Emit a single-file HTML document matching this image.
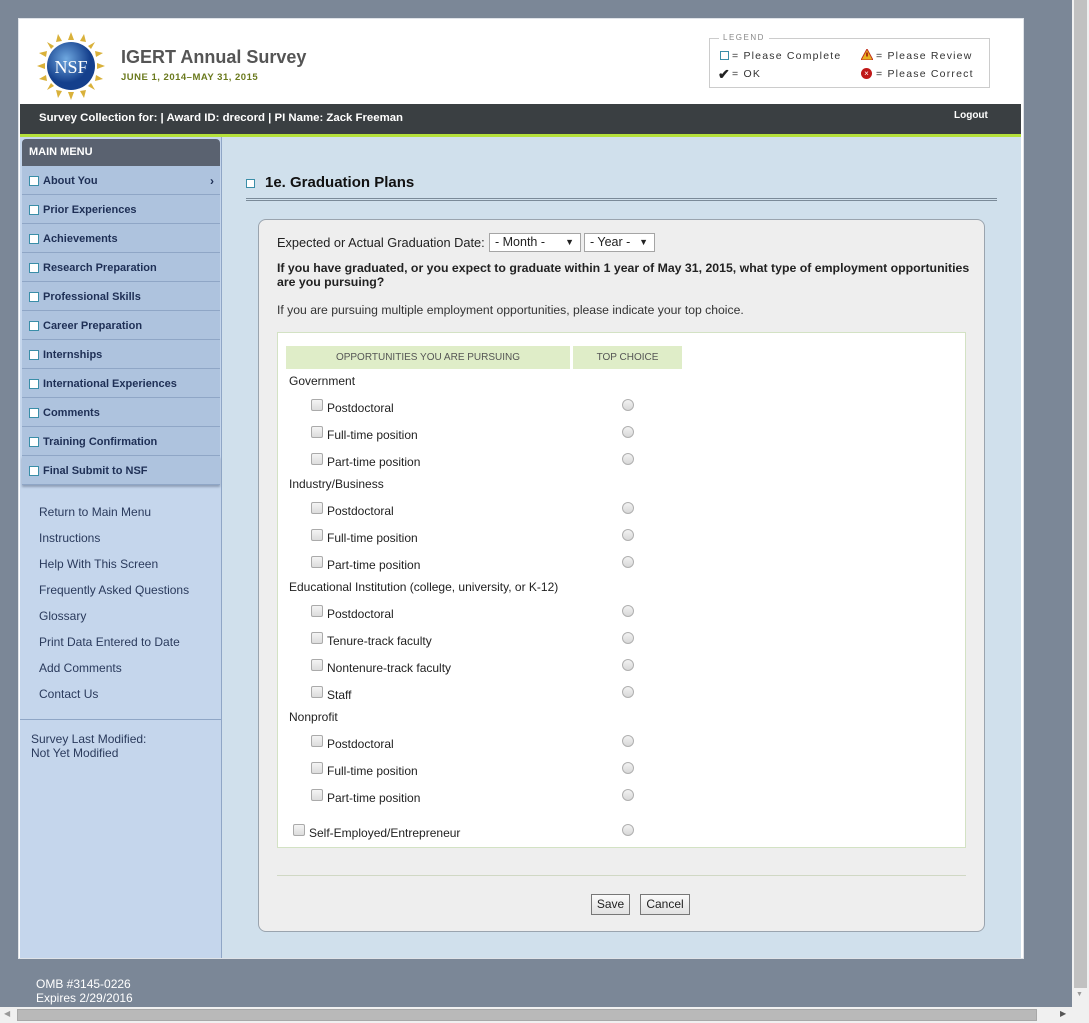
<!DOCTYPE html>
<html><head><meta charset="utf-8"><style>
*{box-sizing:border-box;margin:0;padding:0}
body{width:1089px;height:1023px;background:#7b8797;font-family:"Liberation Sans",Arial,sans-serif;position:relative;overflow:hidden;color:#222}
.a{position:absolute}
.wrap{left:18px;top:18px;width:1006px;height:941px;background:#fff;border:1px solid #dfe3e8}
.mi{position:absolute;left:22px;width:198px;height:29px;background:#aec3de;border-bottom:1px solid #8fa6c6;font-size:11px;font-weight:bold;color:#1e2f55;line-height:30px;padding-left:21px}
.mi:before{content:"";position:absolute;left:7px;top:10px;width:8px;height:8px;border:1px solid #3a8ea8;background:#fff}
.lk{position:absolute;left:39px;font-size:12px;color:#2a3a5c}
.row{position:absolute;height:16px;line-height:16px;font-size:12px;color:#222}
.cb{position:absolute;width:12px;height:12px;border:1px solid #aaa;border-radius:2px;background:linear-gradient(#f4f4f4,#dcdcdc)}
.rd{position:absolute;left:622px;width:12px;height:12px;border:1px solid #b0b0b0;border-radius:50%;background:linear-gradient(#f2f2f2,#d8d8d8)}
.sel{position:absolute;top:233px;height:19px;border:1px solid #a5a5a5;background:#fff;font-size:12.5px;line-height:17px;padding-left:5px}
.sel span{position:absolute;right:6px;top:0;font-size:9px}
.btn{position:absolute;top:894px;height:21px;border:1px solid #777;background:linear-gradient(#fafafa,#e2e2e2);font-size:12px;line-height:19px;text-align:center}
.lg{position:absolute;font-size:10.5px;letter-spacing:1.2px;color:#333}
</style></head><body>
<div class="a wrap"></div>
<svg class="a" style="left:36px;top:31px" width="70" height="70" viewBox="0 0 70 70">
<g fill="#d9b13a">
<polygon points="35,1 38,9 32,9"/><polygon points="35,69 38,61 32,61"/><polygon points="1,35 9,32 9,38"/><polygon points="69,35 61,32 61,38"/>
<polygon points="11,11 18,15 15,18"/><polygon points="59,59 52,55 55,52"/><polygon points="59,11 55,18 52,15"/><polygon points="11,59 15,52 18,55"/>
<polygon points="22,3 26,10 20,11"/><polygon points="48,3 50,11 44,10"/><polygon points="22,67 20,59 26,60"/><polygon points="48,67 44,60 50,59"/>
<polygon points="3,22 11,20 10,26"/><polygon points="3,48 10,44 11,50"/><polygon points="67,22 60,26 59,20"/><polygon points="67,48 59,50 60,44"/>
</g>
<defs><radialGradient id="g" cx="40%" cy="35%"><stop offset="0" stop-color="#6fa8e0"/><stop offset="1" stop-color="#143f8c"/></radialGradient></defs>
<circle cx="35" cy="35" r="24" fill="url(#g)"/>
<text x="35" y="42" font-family="Liberation Serif,serif" font-size="18" fill="#fff" text-anchor="middle">NSF</text>
</svg>
<div class="a" style="left:121px;top:47px;font-size:18px;font-weight:bold;color:#555">IGERT Annual Survey</div>
<div class="a" style="left:121px;top:72px;font-size:9.5px;font-weight:bold;color:#6b7a1e;letter-spacing:.5px">JUNE 1, 2014–MAY 31, 2015</div>
<div class="a" style="left:709px;top:38px;width:281px;height:50px;border:1px solid #ccc"></div>
<div class="a" style="left:719px;top:33px;background:#fff;padding:0 4px;font-size:8px;color:#888;letter-spacing:1.5px">LEGEND</div>
<div class="a" style="left:720px;top:51px;width:9px;height:9px;border:1px solid #3a8ea8"></div>
<div class="lg" style="left:732px;top:50px">= Please Complete</div>
<div class="a" style="left:718px;top:66px;font-size:14px;font-weight:bold">✔</div>
<div class="lg" style="left:732px;top:68px">= OK</div>
<svg class="a" style="left:861px;top:49px" width="12" height="11"><polygon points="6,0 12,11 0,11" fill="#e8b020" stroke="#c03020"/><rect x="5.3" y="3.5" width="1.4" height="4" fill="#900"/></svg>
<div class="lg" style="left:876px;top:50px">= Please Review</div>
<div class="a" style="left:861px;top:68px;width:11px;height:11px;border-radius:50%;background:#c01818;color:#fff;font-size:8px;line-height:11px;text-align:center">×</div>
<div class="lg" style="left:876px;top:68px">= Please Correct</div>
<div class="a" style="left:20px;top:104px;width:1001px;height:30px;background:#3a3f42"></div>
<div class="a" style="left:20px;top:134px;width:1001px;height:3px;background:#b5e13b"></div>
<div class="a" style="left:39px;top:112px;font-size:11.4px;font-weight:bold;color:#fff">Survey Collection for: | Award ID: drecord | PI Name: Zack Freeman</div>
<div class="a" style="left:954px;top:110px;font-size:10px;font-weight:bold;color:#fff">Logout</div>
<div class="a" style="left:20px;top:137px;width:202px;height:821px;background:#c5d6ec;border-right:1px solid #8fa6c6"></div>
<div class="a" style="left:222px;top:137px;width:799px;height:821px;background:#d0e0ec"></div>
<div class="a" style="left:22px;top:139px;width:198px;height:27px;background:#5a6270;border-radius:4px 4px 0 0;color:#fff;font-size:11px;font-weight:bold;line-height:26px;padding-left:7px">MAIN MENU</div>
<div class="mi" style="top:166px">About You<span style="position:absolute;right:6px;font-size:12px">›</span></div>
<div class="mi" style="top:195px">Prior Experiences</div>
<div class="mi" style="top:224px">Achievements</div>
<div class="mi" style="top:253px">Research Preparation</div>
<div class="mi" style="top:282px">Professional Skills</div>
<div class="mi" style="top:311px">Career Preparation</div>
<div class="mi" style="top:340px">Internships</div>
<div class="mi" style="top:369px">International Experiences</div>
<div class="mi" style="top:398px">Comments</div>
<div class="mi" style="top:427px">Training Confirmation</div>
<div class="mi" style="top:456px;box-shadow:0 2px 2px #8fa0b8">Final Submit to NSF</div>
<div class="lk" style="top:505px">Return to Main Menu</div>
<div class="lk" style="top:531px">Instructions</div>
<div class="lk" style="top:557px">Help With This Screen</div>
<div class="lk" style="top:583px">Frequently Asked Questions</div>
<div class="lk" style="top:609px">Glossary</div>
<div class="lk" style="top:635px">Print Data Entered to Date</div>
<div class="lk" style="top:661px">Add Comments</div>
<div class="lk" style="top:687px">Contact Us</div>
<div class="a" style="left:20px;top:719px;width:202px;height:1px;background:#8fa6c6"></div>
<div class="a" style="left:31px;top:732px;font-size:12px;color:#2a3a5c;line-height:14px">Survey Last Modified:<br>Not Yet Modified</div>
<div class="a" style="left:246px;top:179px;width:9px;height:9px;border:1px solid #3a8ea8;background:#fff"></div>
<div class="a" style="left:265px;top:174px;font-size:15px;font-weight:bold;color:#111">1e. Graduation Plans</div>
<div class="a" style="left:246px;top:198px;width:751px;height:3px;border-top:1px solid #7a8a98;border-bottom:1px solid #7a8a98"></div>
<div class="a" style="left:258px;top:219px;width:727px;height:713px;background:#eee;border:1px solid #9aa4ae;border-radius:8px"></div>
<div class="a" style="left:277px;top:235px;font-size:12.8px;color:#222">Expected or Actual Graduation Date:</div>
<div class="sel" style="left:489px;width:92px">- Month -<span>▼</span></div>
<div class="sel" style="left:584px;width:71px">- Year -<span>▼</span></div>
<div class="a" style="left:277px;top:261px;width:710px;font-size:12.3px;font-weight:bold;line-height:14px;color:#222">If you have graduated, or you expect to graduate within 1 year of May 31, 2015, what type of employment opportunities<br>are you pursuing?</div>
<div class="a" style="left:277px;top:303px;font-size:12.2px;color:#333">If you are pursuing multiple employment opportunities, please indicate your top choice.</div>
<div class="a" style="left:277px;top:332px;width:689px;height:516px;background:#fff;border:1px solid #d3e2c4"></div>
<div class="a" style="left:286px;top:346px;width:284px;height:23px;background:#dfedc8;font-size:10px;color:#555;text-align:center;line-height:23px">OPPORTUNITIES YOU ARE PURSUING</div>
<div class="a" style="left:573px;top:346px;width:109px;height:23px;background:#dfedc8;font-size:10px;color:#555;text-align:center;line-height:23px">TOP CHOICE</div>

<div class="row" style="left:289px;top:373px">Government</div>
<div class="cb" style="left:311px;top:399px"></div><div class="row" style="left:327px;top:400px">Postdoctoral</div><div class="rd" style="top:399px"></div>
<div class="cb" style="left:311px;top:426px"></div><div class="row" style="left:327px;top:427px">Full-time position</div><div class="rd" style="top:426px"></div>
<div class="cb" style="left:311px;top:453px"></div><div class="row" style="left:327px;top:454px">Part-time position</div><div class="rd" style="top:453px"></div>
<div class="row" style="left:289px;top:476px">Industry/Business</div>
<div class="cb" style="left:311px;top:502px"></div><div class="row" style="left:327px;top:503px">Postdoctoral</div><div class="rd" style="top:502px"></div>
<div class="cb" style="left:311px;top:529px"></div><div class="row" style="left:327px;top:530px">Full-time position</div><div class="rd" style="top:529px"></div>
<div class="cb" style="left:311px;top:556px"></div><div class="row" style="left:327px;top:557px">Part-time position</div><div class="rd" style="top:556px"></div>
<div class="row" style="left:289px;top:579px">Educational Institution (college, university, or K-12)</div>
<div class="cb" style="left:311px;top:605px"></div><div class="row" style="left:327px;top:606px">Postdoctoral</div><div class="rd" style="top:605px"></div>
<div class="cb" style="left:311px;top:632px"></div><div class="row" style="left:327px;top:633px">Tenure-track faculty</div><div class="rd" style="top:632px"></div>
<div class="cb" style="left:311px;top:659px"></div><div class="row" style="left:327px;top:660px">Nontenure-track faculty</div><div class="rd" style="top:659px"></div>
<div class="cb" style="left:311px;top:686px"></div><div class="row" style="left:327px;top:687px">Staff</div><div class="rd" style="top:686px"></div>
<div class="row" style="left:289px;top:709px">Nonprofit</div>
<div class="cb" style="left:311px;top:735px"></div><div class="row" style="left:327px;top:736px">Postdoctoral</div><div class="rd" style="top:735px"></div>
<div class="cb" style="left:311px;top:762px"></div><div class="row" style="left:327px;top:763px">Full-time position</div><div class="rd" style="top:762px"></div>
<div class="cb" style="left:311px;top:789px"></div><div class="row" style="left:327px;top:790px">Part-time position</div><div class="rd" style="top:789px"></div>
<div class="cb" style="left:293px;top:824px"></div><div class="row" style="left:309px;top:825px">Self-Employed/Entrepreneur</div><div class="rd" style="top:824px"></div>

<div class="a" style="left:277px;top:875px;width:689px;height:1px;background:#d0d8c4"></div>
<div class="btn" style="left:591px;width:39px">Save</div>
<div class="btn" style="left:640px;width:50px">Cancel</div>
<div class="a" style="left:36px;top:977px;font-size:12px;color:#fff;line-height:14px">OMB #3145-0226<br>Expires 2/29/2016</div>
<div class="a" style="left:1072px;top:0;width:17px;height:1007px;background:#f0f0f0"></div>
<div class="a" style="left:1074px;top:0;width:13px;height:988px;background:#c1c1c1"></div>
<div class="a" style="left:1076px;top:991px;font-size:7px;color:#999">▼</div>
<div class="a" style="left:0;top:1007px;width:1089px;height:16px;background:#f0f0f0"></div>
<div class="a" style="left:17px;top:1009px;width:1020px;height:12px;background:#b9b9b9;border:1px solid #a8a8a8"></div>
<div class="a" style="left:4px;top:1009px;font-size:8px;color:#999">◀</div>
<div class="a" style="left:1060px;top:1009px;font-size:8px;color:#555">▶</div>
</body></html>
